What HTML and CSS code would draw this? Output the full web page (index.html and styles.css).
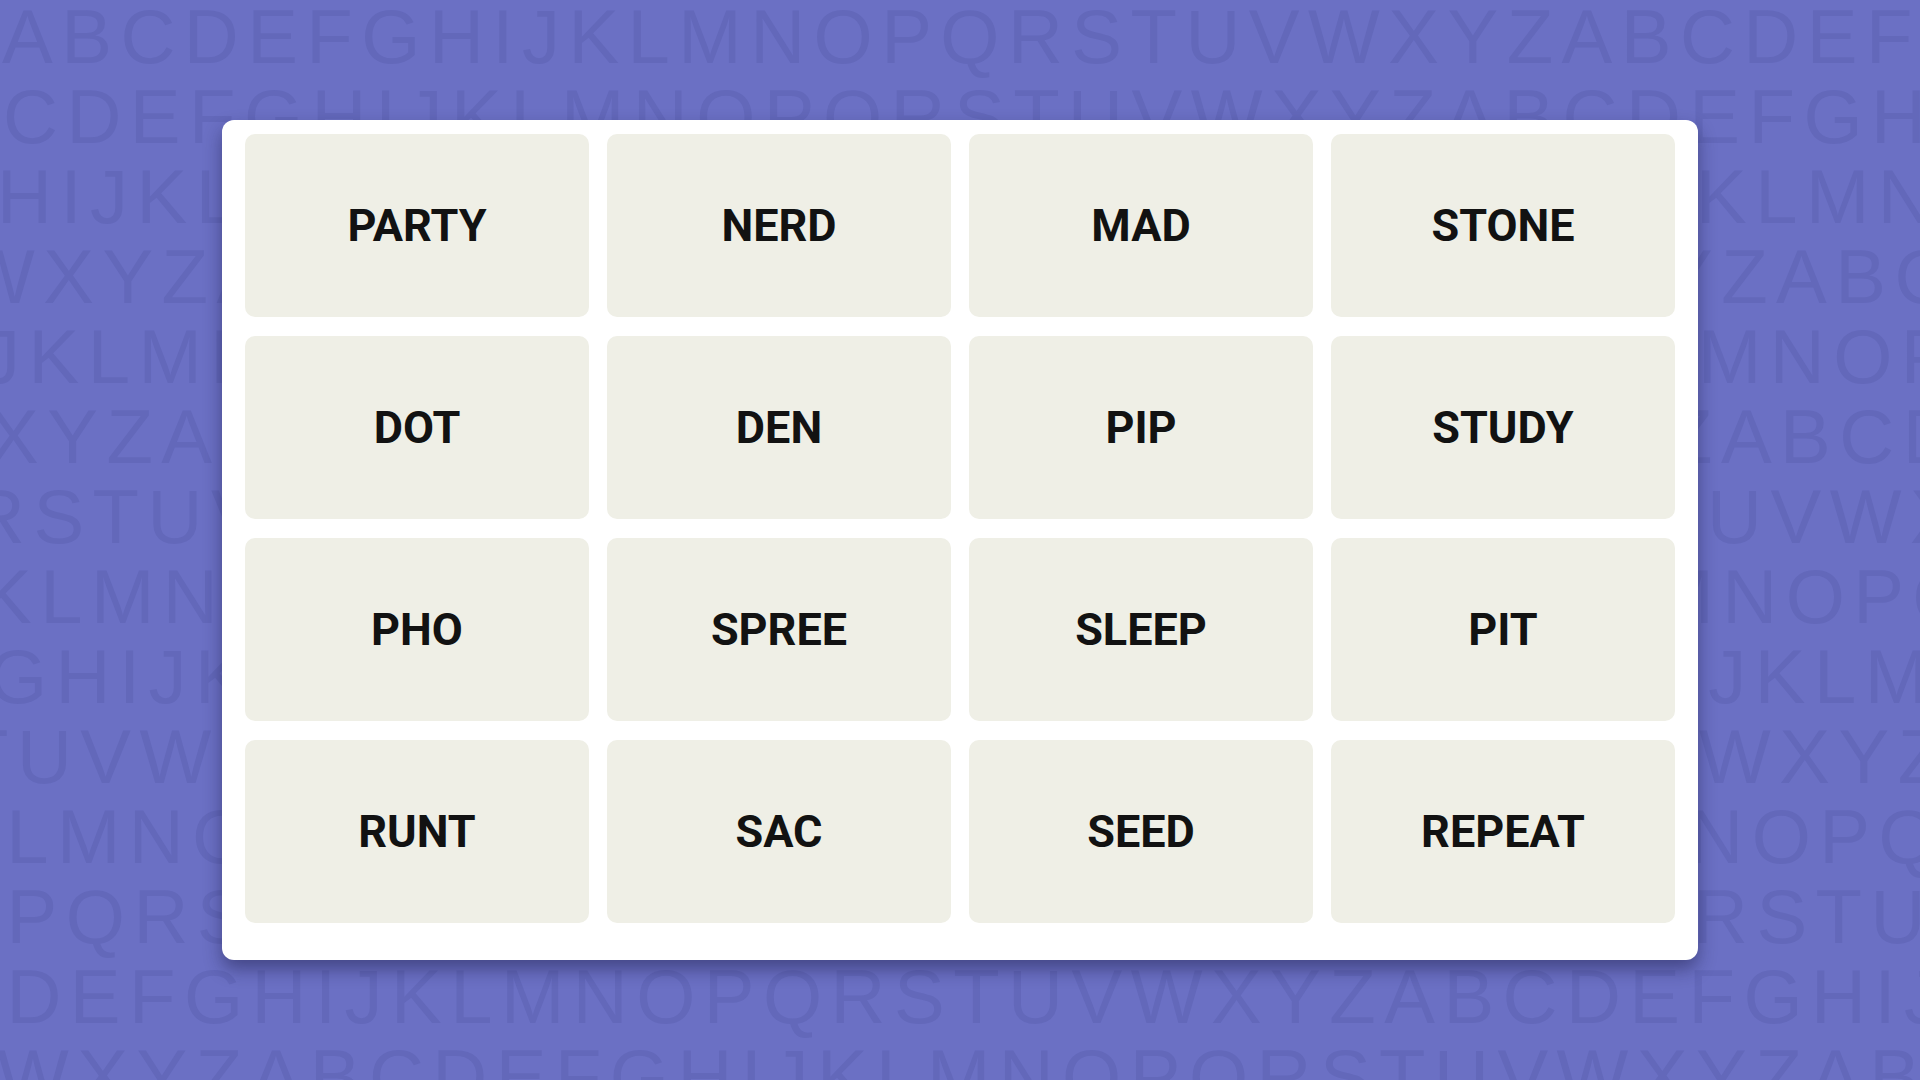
FILE: index.html
```html
<!DOCTYPE html>
<html lang="en">
<head>
    <meta charset="UTF-8">
    <meta name="viewport" content="width=device-width, initial-scale=1.0">
    <title>Connections</title>
    <link rel="stylesheet" href="styles.css">
</head>
<body>
    <div class="stage">
        <!-- alphabet wallpaper -->
        <div class="letters" aria-hidden="true">
            <div class="row r1">ABCDEFGHIJKLMNOPQRSTUVWXYZABCDEFGHIJ</div>
            <div class="row r2">CDEFGHIJKLMNOPQRSTUVWXYZABCDEFGHIJKL</div>
            <div class="row r3">HIJKLMNOPQRSTUVWXYZABCDEFGHIJKLMNOPQ</div>
            <div class="row r4">WXYZABCDEFGHIJKLMNOPQRSTUVWXYZABCDEF</div>
            <div class="row r5">JKLMNOPQRSTUVWXYZABCDEFGHIJKLMNOPQRS</div>
            <div class="row r6">XYZABCDEFGHIJKLMNOPQRSTUVWXYZABCDEFG</div>
            <div class="row r7">RSTUVWXYZABCDEFGHIJKLMNOPQRSTUVWXYZA</div>
            <div class="row r8">KLMNOPQRSTUVWXYZABCDEFGHIJKLMNOPQRST</div>
            <div class="row r9">GHIJKLMNOPQRSTUVWXYZABCDEFGHIJKLMNOP</div>
            <div class="row r10">TUVWXYZABCDEFGHIJKLMNOPQRSTUVWXYZABC</div>
            <div class="row r11">KLMNOPQRSTUVWXYZABCDEFGHIJKLMNOPQRST</div>
            <div class="row r12">OPQRSTUVWXYZABCDEFGHIJKLMNOPQRSTUVWX</div>
            <div class="row r13">CDEFGHIJKLMNOPQRSTUVWXYZABCDEFGHIJKL</div>
            <div class="row r14">WXYZABCDEFGHIJKLMNOPQRSTUVWXYZABCDEF</div>
        </div>

        <!-- word board -->
        <div class="board">
            <div class="tile">PARTY</div>
            <div class="tile">NERD</div>
            <div class="tile">MAD</div>
            <div class="tile">STONE</div>
            <div class="tile">DOT</div>
            <div class="tile">DEN</div>
            <div class="tile">PIP</div>
            <div class="tile">STUDY</div>
            <div class="tile">PHO</div>
            <div class="tile">SPREE</div>
            <div class="tile">SLEEP</div>
            <div class="tile">PIT</div>
            <div class="tile">RUNT</div>
            <div class="tile">SAC</div>
            <div class="tile">SEED</div>
            <div class="tile">REPEAT</div>
        </div>
    </div>
</body>
</html>
```
FILE: styles.css
```css
body { margin: 0; padding: 0; background: #6b70c4; overflow: hidden; }
.stage { display: grid; width: 1920px; height: 1080px; overflow: hidden; }
.letters, .board { grid-area: 1 / 1; }

.letters { margin-top: -3px; font-family: "Liberation Sans", Arial, sans-serif; font-size: 76px; line-height: 80px; letter-spacing: 8.5px; color: #6368ba; white-space: nowrap; overflow: hidden; }
.row { display: block; }
.r1 { text-indent: 2px; }
.r2 { text-indent: 3px; }
.r3 { text-indent: -3px; }
.r4 { text-indent: -37px; }
.r5 { text-indent: -18px; }
.r6 { text-indent: -12px; }
.r7 { text-indent: -30px; }
.r8 { text-indent: -19px; }
.r9 { text-indent: -12px; }
.r10 { text-indent: -38px; }
.r11 { text-indent: -53px; }
.r12 { text-indent: -61px; }
.r13 { text-indent: -57px; }
.r14 { text-indent: -3px; }

.board { justify-self: center; align-self: start; margin-top: 120px; width: 1476px; height: 840px; box-sizing: border-box; padding: 14px 23px 37px; background: #fff; border-radius: 12px; box-shadow: 0 9px 18px rgba(20, 20, 60, 0.45); display: grid; grid-template-columns: repeat(4, 344px); grid-auto-rows: 183px; column-gap: 18px; row-gap: 19px; }
.tile { display: flex; align-items: center; justify-content: center; background: #efefe6; border-radius: 10px; font-family: Roboto, "Liberation Sans", sans-serif; font-weight: 700; font-size: 45px; color: #121212; }
```
